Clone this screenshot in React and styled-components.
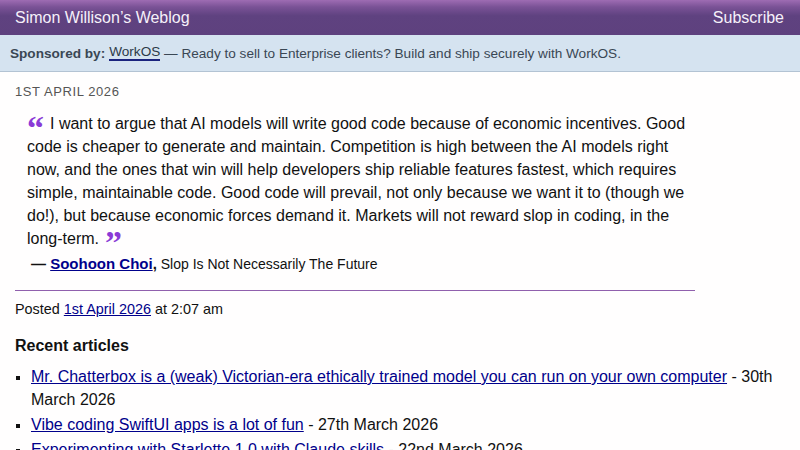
import React from "react";
import styled, { createGlobalStyle } from "styled-components";

const Global = createGlobalStyle`
  html, body { margin: 0; padding: 0; background: #fffefe; }
  body { font-family: "Liberation Sans", Arial, Helvetica, sans-serif; color: #111; overflow: hidden; }
  a { color: #00008b; }
`;

const Header = styled.header`
  height: 35px;
  display: flex;
  align-items: center;
  justify-content: space-between;
  padding: 0 16px 0 15px;
  background: linear-gradient(to bottom, #9e6cb3 0%, #7a5296 20%, #5f4280 45%, #5e417e 100%);
  color: #fff;
  font-size: 16px;
  box-sizing: border-box;
`;

const HeaderLink = styled.span`
  color: #f6f0fa;
`;

const Sponsor = styled.div`
  height: 37px;
  box-sizing: border-box;
  background: #d5e3f0;
  border-bottom: 1px solid #b3c3d3;
  display: flex;
  align-items: center;
  padding: 0 10px;
  font-size: 13.6px;
  color: #3a4754;
  white-space: nowrap;
`;

const SponsorLink = styled.a`
  color: #2c3a48;
  text-decoration: none;
  border-bottom: 2px solid #1a237e;
  margin: 0 0 0 4px;
  line-height: 14px;
`;

const Main = styled.main`
  padding: 12px 15px 0 15px;
`;

const DateLine = styled.div`
  font-size: 13px;
  letter-spacing: 0.6px;
  color: #555;
  text-transform: uppercase;
  line-height: 16px;
`;

const Entry = styled.div`
  width: 680px;
`;

const Quote = styled.blockquote`
  margin: 12px 0 0 12px;
  font-size: 16px;
  line-height: 23px;
  color: #111;
`;

const Mark = styled.span`
  display: inline-block;
  width: ${(p) => (p.$close ? "auto" : "23px")};
  font-family: "Liberation Serif", "DejaVu Serif", serif;
  font-weight: bold;
  color: #8a3ad6;
  font-size: 34px;
  line-height: 0;
  margin: ${(p) => (p.$close ? "0 0 0 6px" : "0")};
  position: relative;
  top: 10px;
`;

const Cite = styled.p`
  margin: 4px 0 0 16px;
  font-size: 14px;
  line-height: 20px;
`;

const CiteStrong = styled.strong`
  font-size: 15px;
  a { color: #00008b; }
`;

const Rule = styled.hr`
  border: 0;
  height: 1px;
  background: #9060ad;
  margin: 16px 0 0 0;
  width: 680px;
`;

const Posted = styled.p`
  margin: 9px 0 0 0;
  font-size: 14.4px;
  line-height: 18px;
`;

const Heading = styled.h3`
  font-size: 16px;
  margin: 19px 0 0 0;
  line-height: 18px;
`;

const List = styled.ul`
  margin: 10px 0 0 0;
  padding: 0 0 0 16px;
  list-style: square;
  font-size: 16px;
  line-height: 23px;
  width: 760px;
`;

const Item = styled.li`
  margin-bottom: 2px;
  &::marker { font-size: 14px; }
`;

export default function App() {
  return (
    <>
      <Global />
      <Header>
        <HeaderLink>Simon Willison’s Weblog</HeaderLink>
        <HeaderLink>Subscribe</HeaderLink>
      </Header>
      <Sponsor>
        <strong>Sponsored by:</strong>
        <SponsorLink href="#">WorkOS</SponsorLink>
        &nbsp;— Ready to sell to Enterprise clients? Build and ship securely with WorkOS.
      </Sponsor>
      <Main>
        <DateLine>1st April 2026</DateLine>
        <Entry>
          <Quote>
            <Mark>“</Mark>I want to argue that AI models will write good code because of economic incentives. Good code is cheaper to generate and maintain. Competition is high between the AI models right now, and the ones that win will help developers ship reliable features fastest, which requires simple, maintainable code. Good code will prevail, not only because we want it to (though we do!), but because economic forces demand it. Markets will not reward slop in coding, in the long-term.<Mark $close>”</Mark>
          </Quote>
          <Cite>
            <CiteStrong>— <a href="#">Soohoon Choi</a>,</CiteStrong> Slop Is Not Necessarily The Future
          </Cite>
          <Rule />
          <Posted>
            Posted <a href="#">1st April 2026</a> at 2:07 am
          </Posted>
        </Entry>
        <Heading>Recent articles</Heading>
        <List>
          <Item>
            <a href="#">Mr. Chatterbox is a (weak) Victorian-era ethically trained model you can run on your own computer</a> - 30th March 2026
          </Item>
          <Item>
            <a href="#">Vibe coding SwiftUI apps is a lot of fun</a> - 27th March 2026
          </Item>
          <Item>
            <a href="#">Experimenting with Starlette 1.0 with Claude skills</a> - 22nd March 2026
          </Item>
        </List>
      </Main>
    </>
  );
}
